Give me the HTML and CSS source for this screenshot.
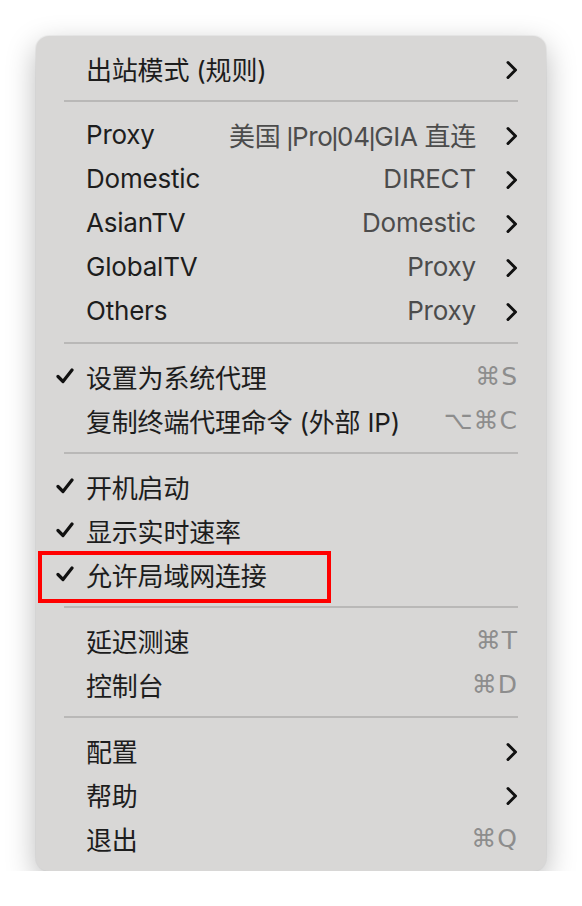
FILE: index.html
```html
<!DOCTYPE html>
<html lang="zh-CN">
<head>
<meta charset="utf-8">
<title>Menu</title>
<link rel="stylesheet" href="styles.css">
</head>
<body>
<div class="menu">
  <div class="row">
    <span class="check"></span><span class="label">出站模式 (规则)</span><span class="value"></span>
    <span class="arrow"><svg viewBox="0 0 12 20" width="12" height="20"><path d="M2 2.5 L9.5 10 L2 17.5" /></svg></span>
  </div>
  <div class="sep"></div>
  <div class="row">
    <span class="check"></span><span class="label">Proxy</span><span class="value tight">美国 <span class="bar">|</span>Pro<span class="bar">|</span>04<span class="bar">|</span>GIA 直连</span>
    <span class="arrow"><svg viewBox="0 0 12 20" width="12" height="20"><path d="M2 2.5 L9.5 10 L2 17.5" /></svg></span>
  </div>
  <div class="row">
    <span class="check"></span><span class="label">Domestic</span><span class="value">DIRECT</span>
    <span class="arrow"><svg viewBox="0 0 12 20" width="12" height="20"><path d="M2 2.5 L9.5 10 L2 17.5" /></svg></span>
  </div>
  <div class="row">
    <span class="check"></span><span class="label">AsianTV</span><span class="value">Domestic</span>
    <span class="arrow"><svg viewBox="0 0 12 20" width="12" height="20"><path d="M2 2.5 L9.5 10 L2 17.5" /></svg></span>
  </div>
  <div class="row">
    <span class="check"></span><span class="label">GlobalTV</span><span class="value">Proxy</span>
    <span class="arrow"><svg viewBox="0 0 12 20" width="12" height="20"><path d="M2 2.5 L9.5 10 L2 17.5" /></svg></span>
  </div>
  <div class="row">
    <span class="check"></span><span class="label">Others</span><span class="value">Proxy</span>
    <span class="arrow"><svg viewBox="0 0 12 20" width="12" height="20"><path d="M2 2.5 L9.5 10 L2 17.5" /></svg></span>
  </div>
  <div class="sep"></div>
  <div class="row">
    <span class="check"><svg viewBox="0 0 18 16" width="18" height="16"><path d="M2 8.5 L7 13.5 L16 2" /></svg></span><span class="label">设置为系统代理</span>
    <span class="shortcut">⌘S</span>
  </div>
  <div class="row">
    <span class="check"></span><span class="label">复制终端代理命令 (外部 IP)</span>
    <span class="shortcut">⌥⌘C</span>
  </div>
  <div class="sep"></div>
  <div class="row">
    <span class="check"><svg viewBox="0 0 18 16" width="18" height="16"><path d="M2 8.5 L7 13.5 L16 2" /></svg></span><span class="label">开机启动</span>
  </div>
  <div class="row">
    <span class="check"><svg viewBox="0 0 18 16" width="18" height="16"><path d="M2 8.5 L7 13.5 L16 2" /></svg></span><span class="label">显示实时速率</span>
  </div>
  <div class="row marked">
    <span class="check"><svg viewBox="0 0 18 16" width="18" height="16"><path d="M2 8.5 L7 13.5 L16 2" /></svg></span><span class="label">允许局域网连接</span>
    <span class="highlight"></span>
  </div>
  <div class="sep"></div>
  <div class="row">
    <span class="check"></span><span class="label">延迟测速</span>
    <span class="shortcut">⌘T</span>
  </div>
  <div class="row">
    <span class="check"></span><span class="label">控制台</span>
    <span class="shortcut">⌘D</span>
  </div>
  <div class="sep"></div>
  <div class="row">
    <span class="check"></span><span class="label">配置</span><span class="value"></span>
    <span class="arrow"><svg viewBox="0 0 12 20" width="12" height="20"><path d="M2 2.5 L9.5 10 L2 17.5" /></svg></span>
  </div>
  <div class="row">
    <span class="check"></span><span class="label">帮助</span><span class="value"></span>
    <span class="arrow"><svg viewBox="0 0 12 20" width="12" height="20"><path d="M2 2.5 L9.5 10 L2 17.5" /></svg></span>
  </div>
  <div class="row">
    <span class="check"></span><span class="label">退出</span>
    <span class="shortcut">⌘Q</span>
  </div>
</div>
</body>
</html>
```

FILE: styles.css
```css
html, body {
  margin: 0;
  padding: 0;
  background: #ffffff;
}

body {
  padding: 36px 36px 0 36px;
  font-family: Inter, "Noto Sans CJK SC", "DejaVu Sans", sans-serif;
  font-size: 26px;
  color: #1d1d1d;
}

.menu {
  width: 510px;
  box-sizing: border-box;
  background: #d8d7d6;
  border-radius: 13px;
  box-shadow: 0 10px 30px rgba(0, 0, 0, 0.28), 0 0 0 1px rgba(0, 0, 0, 0.04);
  padding: 12px 0 9px 0;
}

.row {
  position: relative;
  height: 44px;
  box-sizing: border-box;
  display: flex;
  align-items: center;
  padding: 0 28px 4px 20px;
  white-space: nowrap;
}

.check {
  width: 30px;
  display: flex;
  align-items: center;
  height: 16px;
}

.check svg path {
  fill: none;
  stroke: #111111;
  stroke-width: 3.2;
  stroke-linecap: round;
  stroke-linejoin: round;
}

.label {
  flex: 1;
  letter-spacing: -0.2px;
}

.value {
  color: #4c4c4c;
  letter-spacing: -0.2px;
}

.value.tight {
  letter-spacing: -0.3px;
}

.bar {
  font-family: "Liberation Sans", sans-serif;
  margin: 0 -1px;
}

.arrow {
  width: 42px;
  display: flex;
  justify-content: flex-end;
  align-items: center;
  padding-top: 3px;
}

.arrow svg path {
  fill: none;
  stroke: #111111;
  stroke-width: 3;
  stroke-linecap: round;
  stroke-linejoin: round;
}

.shortcut {
  color: #8d8d8d;
  font-family: "DejaVu Sans", Inter, sans-serif;
  font-size: 25px;
  letter-spacing: 1px;
}

.sep {
  height: 2px;
  background: #b9b8b7;
  margin: 8px 28px 12px 28px;
}

.highlight {
  position: absolute;
  left: 2px;
  top: -3px;
  width: 293px;
  height: 52px;
  box-sizing: border-box;
  border: 4px solid #ff0000;
  pointer-events: none;
}
```
